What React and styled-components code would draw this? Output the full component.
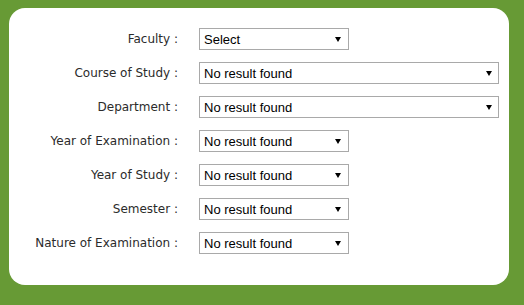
import React, { useState } from 'react'
import styled, { createGlobalStyle } from 'styled-components'

const GlobalStyle = createGlobalStyle`
    html, body {
        margin: 0;
        padding: 0;
        background-color: #679a35;
        height: 100%;
    }
    body {
        font-family: "DejaVu Sans", Verdana, sans-serif;
    }
`

const Page = styled.div`
    padding: 8px 15px 20px 9px;
`

const Card = styled.div`
    background-color: #ffffff;
    width: 500px;
    height: 277px;
    box-sizing: border-box;
    border-radius: 16px;
    padding-top: 20px;
    display: grid;
    grid-template-columns: 169px auto;
    column-gap: 21px;
    row-gap: 12px;
    align-content: start;
    align-items: center;
`

const Label = styled.label`
    text-align: right;
    font-size: 12px;
    color: #2b2b2b;
    white-space: nowrap;
`

const SelectWrap = styled.div`
    position: relative;
    width: ${props => props.wide ? '300px' : '150px'};
    height: 22px;
`

const StyledSelect = styled.select`
    appearance: none;
    -webkit-appearance: none;
    width: 100%;
    height: 100%;
    box-sizing: border-box;
    border: 1px solid #a9a9a9;
    border-radius: 0;
    background-color: #fff;
    padding: 0 16px 0 4px;
    margin: 0;
    font-family: "Liberation Sans", Arial, sans-serif;
    font-size: 13px;
    color: #000;
    outline: none;
`

const Arrow = styled.svg`
    position: absolute;
    right: ${props => props.wide ? '7px' : '8px'};
    top: 9px;
    pointer-events: none;
`

const fields = [
    { label: 'Faculty :', value: 'Select' },
    { label: 'Course of Study :', value: 'No result found', wide: true },
    { label: 'Department :', value: 'No result found', wide: true },
    { label: 'Year of Examination :', value: 'No result found' },
    { label: 'Year of Study :', value: 'No result found' },
    { label: 'Semester :', value: 'No result found' },
    { label: 'Nature of Examination :', value: 'No result found' },
]

function Dropdown({ value, wide }) {
    const [current, setCurrent] = useState(value)
    return (
        <SelectWrap wide={wide}>
            <StyledSelect value={current} onChange={e => setCurrent(e.target.value)}>
                <option>{value}</option>
            </StyledSelect>
            <Arrow wide={wide} width="6" height="5" viewBox="0 0 6 5">
                <path d="M0 0 H6 L3 5 Z" fill="#000" />
            </Arrow>
        </SelectWrap>
    )
}

function App() {
    return (
        <Page>
            <GlobalStyle />
            <Card>
                {fields.map(f => (
                    <React.Fragment key={f.label}>
                        <Label>{f.label}</Label>
                        <Dropdown value={f.value} wide={f.wide} />
                    </React.Fragment>
                ))}
            </Card>
        </Page>
    )
}

export default App
